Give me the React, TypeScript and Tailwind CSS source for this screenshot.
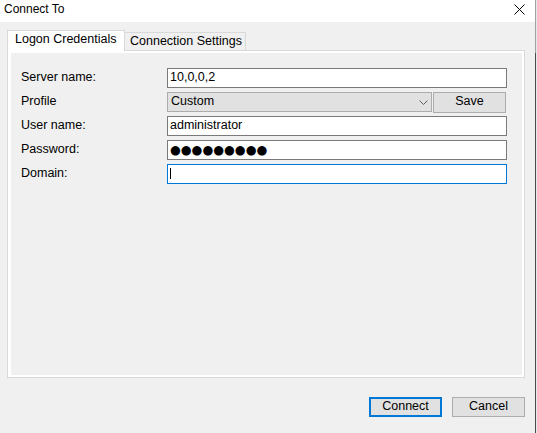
import React from "react";

function Row({ label, children }: { label: string; children: React.ReactNode }) {
  return (
    <div className="flex h-[20px] items-start">
      <div className="w-[146px] leading-[18px] whitespace-nowrap">{label}</div>
      {children}
    </div>
  );
}

export default function App() {
  return (
    <div className="w-[537px] h-[433px] bg-[#f0f0f0] flex overflow-hidden text-black text-[12.5px] font-['Liberation_Sans',Arial,sans-serif]">
      <div className="w-[535px] flex flex-col">
        {/* title bar */}
        <div className="h-[22px] bg-white flex justify-between items-start pl-[4px] pr-[10px]">
          <div className="mt-[1px] leading-[16px] text-[12px]">Connect To</div>
          <svg className="mt-[4px]" width="11" height="11" viewBox="0 0 11 11">
            <path d="M0.5 0.5 L10.5 10.5 M10.5 0.5 L0.5 10.5" stroke="#000" strokeWidth="1" fill="none" />
          </svg>
        </div>

        {/* body */}
        <div className="pl-[7px] pr-[10px] pt-[8px] flex flex-col">
          {/* tabs */}
          <div className="flex items-end h-[21px] -mb-[1px] relative z-10">
            <div className="w-[118px] h-[21px] bg-white border border-b-0 border-[#d9d9d9] pl-[7px] leading-[16px] whitespace-nowrap">
              Logon Credentials
            </div>
            <div className="w-[121px] h-[18px] mb-[1px] bg-[#f0f0f0] border border-l-0 border-b-0 border-[#d9d9d9] pl-[5px] leading-[17px] whitespace-nowrap">
              Connection Settings
            </div>
          </div>

          {/* panel */}
          <div className="w-[518px] h-[328px] border border-[#d9d9d9] bg-white pt-[2px] pl-[3px] pr-[2px] pb-[2px] flex">
            <div className="flex-1 bg-[#f0f0f0] pt-[15px] pl-[10px] flex flex-col gap-[4px]">
              <Row label="Server name:">
                <div className="w-[340px] h-[20px] border border-[#7a7a7a] bg-white pl-[2px] leading-[16px] whitespace-nowrap">
                  10,0,0,2
                </div>
              </Row>
              <Row label="Profile">
                <div className="w-[265px] h-[20px] bg-[#e1e1e1] border border-[#adadad] flex items-start justify-between pl-[3px] pr-[3px]">
                  <span className="leading-[17px]">Custom</span>
                  <svg className="mt-[7px]" width="9" height="6" viewBox="0 0 9 6">
                    <path d="M0.5 0.5 L4.5 4.5 L8.5 0.5" stroke="#606060" strokeWidth="1" fill="none" />
                  </svg>
                </div>
                <div className="ml-[1px] w-[73px] h-[21px] bg-[#e1e1e1] border border-[#adadad] text-center leading-[16px]">
                  Save
                </div>
              </Row>
              <Row label="User name:">
                <div className="w-[340px] h-[20px] border border-[#7a7a7a] bg-white pl-[2px] leading-[16px] whitespace-nowrap">
                  administrator
                </div>
              </Row>
              <Row label="Password:">
                <div className="w-[340px] h-[20px] border border-[#7a7a7a] bg-white pl-[2px] leading-[17px] whitespace-nowrap text-[12.4px] font-['DejaVu_Sans',sans-serif]">
                  ●●●●●●●●●
                </div>
              </Row>
              <Row label="Domain:">
                <div className="w-[340px] h-[20px] border border-[#0078d7] bg-white pl-[2px] pt-[3px]">
                  <div className="w-[1px] h-[11px] bg-black" />
                </div>
              </Row>
            </div>
          </div>

          {/* buttons */}
          <div className="mt-[19px] flex justify-end gap-[10px]">
            <div className="w-[73px] h-[20px] border-2 border-[#0078d7] bg-[#e1e1e1] text-center leading-[15px]">
              Connect
            </div>
            <div className="w-[73px] h-[20px] border border-[#adadad] bg-[#e1e1e1] text-center leading-[17px]">
              Cancel
            </div>
          </div>
        </div>
      </div>
      <div className="w-[1px] flex flex-col">
        <div className="h-[53px] bg-[#a0a0a0]" />
        <div className="flex-1 bg-[#4a4a4a]" />
      </div>
      <div className="w-[1px] bg-[#e8e8e8]" />
    </div>
  );
}
